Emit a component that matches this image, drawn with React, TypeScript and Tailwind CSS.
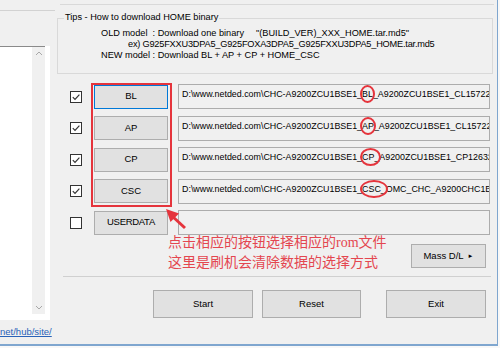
const ui = "font-['Liberation_Sans',Arial,sans-serif]";

const rows = [
  { label: "BL", checked: true, focus: true, pre: "D:\\www.netded.com\\CHC-A9200ZCU1BSE1_", mark: "BL", post: "_A9200ZCU1BSE1_CL157226" },
  { label: "AP", checked: true, pre: "D:\\www.netded.com\\CHC-A9200ZCU1BSE1_", mark: "AP", post: "_A9200ZCU1BSE1_CL157226" },
  { label: "CP", checked: true, pre: "D:\\www.netded.com\\CHC-A9200ZCU1BSE1_", mark: "CP_", post: "A9200ZCU1BSE1_CP126323" },
  { label: "CSC", checked: true, pre: "D:\\www.netded.com\\CHC-A9200ZCU1BSE1_", mark: "CSC_", post: "OMC_CHC_A9200CHC1BS" },
  { label: "USERDATA", checked: false, pre: "", mark: "", post: "" },
];

function CheckBox({ checked }: { checked: boolean }) {
  return (
    <div className="w-[12px] h-[12px] border border-[#333333] bg-white flex items-center justify-center">
      {checked && (
        <svg width="10" height="10" viewBox="0 0 10 10">
          <polyline points="1.8,5.2 4,7.4 8.4,2.6" fill="none" stroke="#333333" strokeWidth="1.2" />
        </svg>
      )}
    </div>
  );
}

function WinButton({ children, className = "", focus = false }: { children: React.ReactNode; className?: string; focus?: boolean }) {
  return (
    <div
      className={`flex items-center justify-center bg-[#e1e1e1] border text-[9.5px] text-black ${focus ? "border-[#0078d7]" : "border-[#adadad]"} ${className}`}
    >
      {children}
    </div>
  );
}

export default function App() {
  return (
    <div className={`w-[500px] h-[348px] bg-[#f8f8f8] overflow-hidden relative ${ui}`}>
      <div className="w-[498px] h-[346px] bg-[#f0f0f0] border-r border-b-2 border-[#7fa6cf] flex">
        {/* left list panel */}
        <div className="w-[57px] flex flex-col">
          <div className="h-[11px] w-[55px] border-b border-[#d2d2d2]" />
          <div className="mt-[35px] w-[50px] h-[274px] bg-white flex">
            <div className="w-[45px] h-[268px] border-t border-[#8a8a8a] flex">
              <div className="ml-auto w-[13px] h-full bg-[#f0f0f0] flex flex-col items-center justify-between py-[3px]">
                <svg width="8" height="6" viewBox="0 0 8 6">
                  <polyline points="1,5 4,2 7,5" fill="none" stroke="#a8a8a8" strokeWidth="1" />
                </svg>
                <svg width="8" height="6" viewBox="0 0 8 6">
                  <polyline points="1,1 4,4 7,1" fill="none" stroke="#a8a8a8" strokeWidth="1" />
                </svg>
              </div>
            </div>
          </div>
          <div className="mt-[6px] text-[9.5px] leading-[12px] text-[#2a62b8] underline whitespace-nowrap">net/hub/site/</div>
        </div>

        {/* main panel */}
        <div className="flex-1 flex flex-col">
          <div className="h-[5px] mx-[3px] border-b border-[#d9d9d9]" />

          <div className="mt-[13px] h-[56px] mr-[4px] border border-[#d9d9d9] relative text-[9.2px] leading-[11px] text-black">
            <span className="absolute left-[6px] top-[-7px] bg-[#f0f0f0] px-px">Tips - How to download HOME binary</span>
            <div className="pt-[9px] pl-[43px] whitespace-nowrap">
              <div>
                <span className="inline-block w-[155px]">OLD model&nbsp;&nbsp;: Download one binary</span>
                <span>"(BUILD_VER)_XXX_HOME.tar.md5"</span>
              </div>
              <div className="pl-[27px] tracking-[-0.2px]">ex) G925FXXU3DPA5_G925FOXA3DPA5_G925FXXU3DPA5_HOME.tar.md5</div>
              <div>NEW model : Download BL + AP + CP + HOME_CSC</div>
            </div>
          </div>

          <div className="mt-[10px] flex flex-col gap-[6.5px]">
            {rows.map((r) => (
              <div key={r.label} className="flex items-center h-[25px]">
                <div className="ml-[13px]">
                  <CheckBox checked={r.checked} />
                </div>
                <WinButton focus={r.focus} className="ml-[12px] w-[74px] h-[24px]">
                  <span className={r.label === "USERDATA" ? "tracking-[-0.3px]" : ""}>{r.label}</span>
                </WinButton>
                <div className="ml-[10px] w-[312px] h-[25px] border border-[#acacac] bg-[#f0f0f0] overflow-hidden px-[3px] pt-[3px] text-[8.9px] leading-[12px] text-black whitespace-nowrap">
                  {r.pre}
                  {r.mark && (
                    <span className="relative">
                      {r.mark}
                      <span className="absolute left-[-2px] right-[-2px] top-[-4px] bottom-[-4px] rounded-[50%] border-2 border-[#e5343c]" />
                    </span>
                  )}
                  {r.post}
                </div>
              </div>
            ))}
          </div>

          <div className="mt-[-2px] flex items-start">
            <div className="ml-[111px] text-[14px] leading-[19.5px] text-[#e4464f] font-['Liberation_Serif','Noto_Sans_CJK_SC',serif] whitespace-nowrap">
              <div>点击相应的按钮选择相应的rom文件</div>
              <div>这里是刷机会清除数据的选择方式</div>
            </div>
            <WinButton className="ml-auto mr-[11px] mt-[11px] w-[75px] h-[24px] gap-[4px]">
              Mass D/L <span className="text-[6px]">►</span>
            </WinButton>
          </div>

          <div className="mt-[4px] mx-[6px] border-t border-[#d0d0d0]" />

          <div className="mt-[13px] flex">
            <WinButton className="ml-[96px] w-[100px] h-[28px]">Start</WinButton>
            <WinButton className="ml-[9px] w-[99px] h-[28px]">Reset</WinButton>
            <WinButton className="ml-[25px] w-[100px] h-[28px]">Exit</WinButton>
          </div>
        </div>
      </div>

      {/* annotations */}
      <div className="absolute left-[91px] top-[83px] w-[81px] h-[124px] border-2 border-[#e5343c]" />
      <svg className="absolute left-[160px] top-[205px]" width="30" height="28" viewBox="0 0 30 28">
        <line x1="12" y1="11" x2="25" y2="23" stroke="#e5343c" strokeWidth="3" />
        <polygon points="6,4 19,8.5 10.5,17" fill="#e5343c" />
      </svg>
    </div>
  );
}
